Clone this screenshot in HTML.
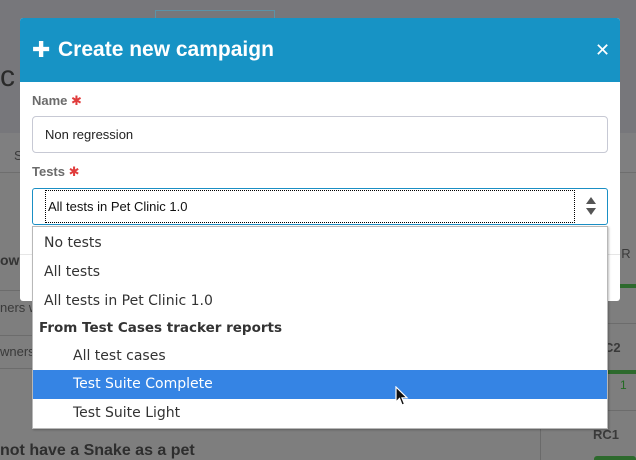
<!DOCTYPE html>
<html><head><meta charset="utf-8"><style>
*{box-sizing:border-box;margin:0;padding:0}
body{width:636px;height:460px;overflow:hidden;background:#7b7b7e;font-family:"Liberation Sans","DejaVu Sans",sans-serif;position:relative}
.abs{position:absolute}
.bgtxt{color:#3a3a3a;font-size:14px}
</style></head><body>
<div class="abs" style="left:0;top:0;width:636px;height:133px;background:#77777b"></div>
<div class="abs" style="left:0;top:133px;width:636px;height:40px;background:#7f7f80;border-bottom:1px solid #6e6e6e"></div>
<div class="abs" style="left:0;top:173px;width:636px;height:287px;background:#7e7e7e"></div>
<div class="abs" style="left:155px;top:10px;width:120px;height:8px;border:1px solid #5a93a8;border-bottom:none"></div>
<div class="abs bgtxt" style="left:0;top:60px;font-size:30px;color:#2a2a2a">c :</div>
<div class="abs bgtxt" style="left:14px;top:148px;font-size:13px">S</div>
<div class="abs bgtxt" style="left:0;top:252px;font-weight:bold;color:#333">ow</div>
<div class="abs" style="left:0;top:290px;width:32px;height:1px;background:#6c6c6c"></div>
<div class="abs bgtxt" style="left:0;top:300px;font-size:13px">ners w</div>
<div class="abs" style="left:0;top:335px;width:32px;height:1px;background:#6c6c6c"></div>
<div class="abs bgtxt" style="left:0;top:344px;font-size:13px">wners</div>
<div class="abs" style="left:0;top:368px;width:32px;height:1px;background:#6c6c6c"></div>
<div class="abs bgtxt" style="left:0;top:442px;font-size:16px;font-weight:bold;color:#2e2e2e">not have a Snake as a pet</div>
<div class="abs" style="left:540px;top:420px;width:1px;height:40px;background:#6a6a6a"></div>
<div class="abs bgtxt" style="left:610px;top:192px;font-size:28px;color:#2a2a2a">t</div>
<div class="abs bgtxt" style="left:614px;top:246px;font-size:13px">I R</div>
<div class="abs" style="left:620px;top:284px;width:16px;height:4px;background:#2d6a2d"></div>
<div class="abs" style="left:580px;top:323px;width:56px;height:1px;background:#6c6c6c"></div>
<div class="abs bgtxt" style="left:604px;top:340px;font-size:13px;font-weight:bold">C2</div>
<div class="abs" style="left:580px;top:370px;width:56px;height:4px;background:#2d6a2d"></div>
<div class="abs" style="left:620px;top:378px;font-size:12px;color:#236b23">1</div>
<div class="abs" style="left:580px;top:410px;width:56px;height:1px;background:#6c6c6c"></div>
<div class="abs bgtxt" style="left:593px;top:427px;font-size:13px;font-weight:bold">RC1</div>
<div class="abs" style="left:594px;top:456px;width:42px;height:4px;background:#2d6a2d;border-radius:3px 3px 0 0"></div>

<div class="abs" style="left:20px;top:18px;width:600px;height:283px;background:#fff;border-radius:3px;overflow:hidden">
 <div style="height:64px;background:#1793c5;color:#fff;position:relative">
  <div class="abs" style="left:12px;top:18px;font-size:22px;font-weight:bold;line-height:28px">✚</div>
  <div class="abs" style="left:38px;top:18px;font-size:21px;font-weight:bold;line-height:28px">Create new campaign</div>
  <div class="abs" style="left:575px;top:21px;font-size:18px;font-weight:bold;line-height:22px">✕</div>
 </div>
 <div class="abs" style="left:12px;top:75px;font-size:13px;font-weight:bold;color:#6b6b6b">Name <span style="color:#e03c3c">✱</span></div>
 <div class="abs" style="left:12px;top:98px;width:576px;height:37px;border:1px solid #c7c9d4;border-radius:4px;padding:0 0 0 12px;line-height:35px;font-size:13px;color:#222">Non regression</div>
 <div class="abs" style="left:12px;top:146px;font-size:13px;font-weight:bold;color:#6b6b6b">Tests <span style="color:#e03c3c">✱</span></div>
 <div class="abs" style="left:12px;top:170px;width:576px;height:37px;border:1px solid #1a8fc4;border-radius:3px">
  <div class="abs" style="left:12px;top:1px;width:530px;height:33px;border:1px dotted #000"></div>
  <div class="abs" style="left:15px;top:0;line-height:35px;font-size:13px;color:#111">All tests in Pet Clinic 1.0</div>
  <div class="abs" style="left:553px;top:8px;width:0;height:0;border-left:5px solid transparent;border-right:5px solid transparent;border-bottom:7px solid #555"></div>
  <div class="abs" style="left:553px;top:19px;width:0;height:0;border-left:5px solid transparent;border-right:5px solid transparent;border-top:7px solid #555"></div>
 </div>
 <div class="abs" style="left:0;top:236px;width:600px;height:1px;background:#e6e6e6"></div>
</div>

<div class="abs" style="left:32px;top:226px;width:576px;height:203px;background:#fff;border:1px solid #b8b8b8;box-shadow:1px 1px 2px rgba(0,0,0,.25);font-family:'DejaVu Sans','Liberation Sans',sans-serif;font-size:14px;color:#333">
 <div class="abs" style="left:11px;top:2px;line-height:29px">No tests</div>
 <div class="abs" style="left:11px;top:31px;line-height:29px">All tests</div>
 <div class="abs" style="left:11px;top:60px;line-height:29px">All tests in Pet Clinic 1.0</div>
 <div class="abs" style="left:6px;top:87px;line-height:29px;font-weight:bold;font-size:13.5px">From Test Cases tracker reports</div>
 <div class="abs" style="left:40px;top:115px;line-height:29px">All test cases</div>
 <div class="abs" style="left:0;top:143px;width:574px;height:29px;background:#3584e4"></div>
 <div class="abs" style="left:40px;top:143px;line-height:29px;color:#fff">Test Suite Complete</div>
 <div class="abs" style="left:40px;top:172px;line-height:29px">Test Suite Light</div>
</div>
<svg class="abs" style="left:395px;top:386px" width="14" height="22" viewBox="0 0 14 22"><path d="M1 1 L1 16 L4.5 12.5 L7 19 L9.5 18 L7 11.8 L12 11.8 Z" fill="#111" stroke="#fff" stroke-width="1.2"/></svg>
</body></html>
